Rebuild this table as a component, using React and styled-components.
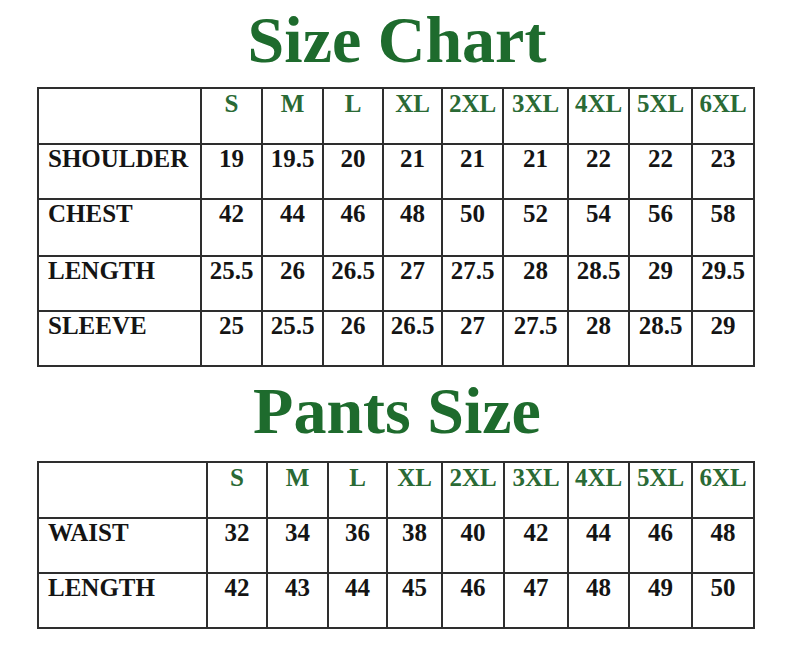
import React from 'react';
import styled, { createGlobalStyle } from 'styled-components';

const GlobalStyle = createGlobalStyle`
    body {
        margin: 0;
        background: #ffffff;
        font-family: "Liberation Serif", "Times New Roman", serif;
    }
`;

const Page = styled.div`
    width: 794px;
    height: 650px;
    padding-top: 7px;
    box-sizing: border-box;
    display: flex;
    flex-direction: column;
    align-items: center;
    overflow: hidden;
`;

const Title = styled.h1`
    margin: 0 0 ${(p) => p.$gap}px 0;
    font-size: 66px;
    line-height: 66px;
    font-weight: bold;
    color: #1e6b2d;
    letter-spacing: 0;
`;

const Table = styled.table`
    border-collapse: collapse;
    table-layout: fixed;
    width: 716px;
    margin-left: -2px;
    margin-bottom: ${(p) => p.$gap || 0}px;
`;

const Row = styled.tr`
    height: ${(p) => p.$h}px;
`;

const Cell = styled.td`
    border: 2px solid #2e2e2e;
    padding: ${(p) => (p.$head ? 1 : 0)}px 0 0 ${(p) => (p.$label ? 9 : 0)}px;
    vertical-align: top;
    text-align: ${(p) => (p.$label ? 'left' : 'center')};
    font-size: 25px;
    line-height: 28px;
    font-weight: bold;
    color: ${(p) => (p.$head ? '#2a6a35' : '#141414')};
    white-space: nowrap;
    overflow: visible;
`;

const sizes = ['S', 'M', 'L', 'XL', '2XL', '3XL', '4XL', '5XL', '6XL'];

const shirt = [
    ['SHOULDER', ['19', '19.5', '20', '21', '21', '21', '22', '22', '23']],
    ['CHEST', ['42', '44', '46', '48', '50', '52', '54', '56', '58']],
    ['LENGTH', ['25.5', '26', '26.5', '27', '27.5', '28', '28.5', '29', '29.5']],
    ['SLEEVE', ['25', '25.5', '26', '26.5', '27', '27.5', '28', '28.5', '29']],
];

const pants = [
    ['WAIST', ['32', '34', '36', '38', '40', '42', '44', '46', '48']],
    ['LENGTH', ['42', '43', '44', '45', '46', '47', '48', '49', '50']],
];

function SizeTable({ cols, rows, heights, gap }) {
    return (
        <Table $gap={gap}>
            <colgroup>
                {cols.map((w, i) => (
                    <col key={i} style={{ width: w }} />
                ))}
            </colgroup>
            <tbody>
                <Row $h={heights[0]}>
                    <Cell $label />
                    {sizes.map((s) => (
                        <Cell key={s} $head>{s}</Cell>
                    ))}
                </Row>
                {rows.map(([name, values], r) => (
                    <Row key={name} $h={heights[r + 1]}>
                        <Cell $label>{name}</Cell>
                        {values.map((v, i) => (
                            <Cell key={i}>{v}</Cell>
                        ))}
                    </Row>
                ))}
            </tbody>
        </Table>
    );
}

export default function App() {
    return (
        <Page>
            <GlobalStyle />
            <Title $gap={14}>Size Chart</Title>
            <SizeTable
                cols={[163, 61, 61, 60, 59, 61, 65, 61, 63, 62]}
                rows={shirt}
                heights={[56, 55, 57, 55, 55]}
                gap={11}
            />
            <Title $gap={17}>Pants Size</Title>
            <SizeTable
                cols={[169, 60, 61, 59, 55, 62, 64, 61, 63, 62]}
                rows={pants}
                heights={[56, 55, 55]}
            />
        </Page>
    );
}
